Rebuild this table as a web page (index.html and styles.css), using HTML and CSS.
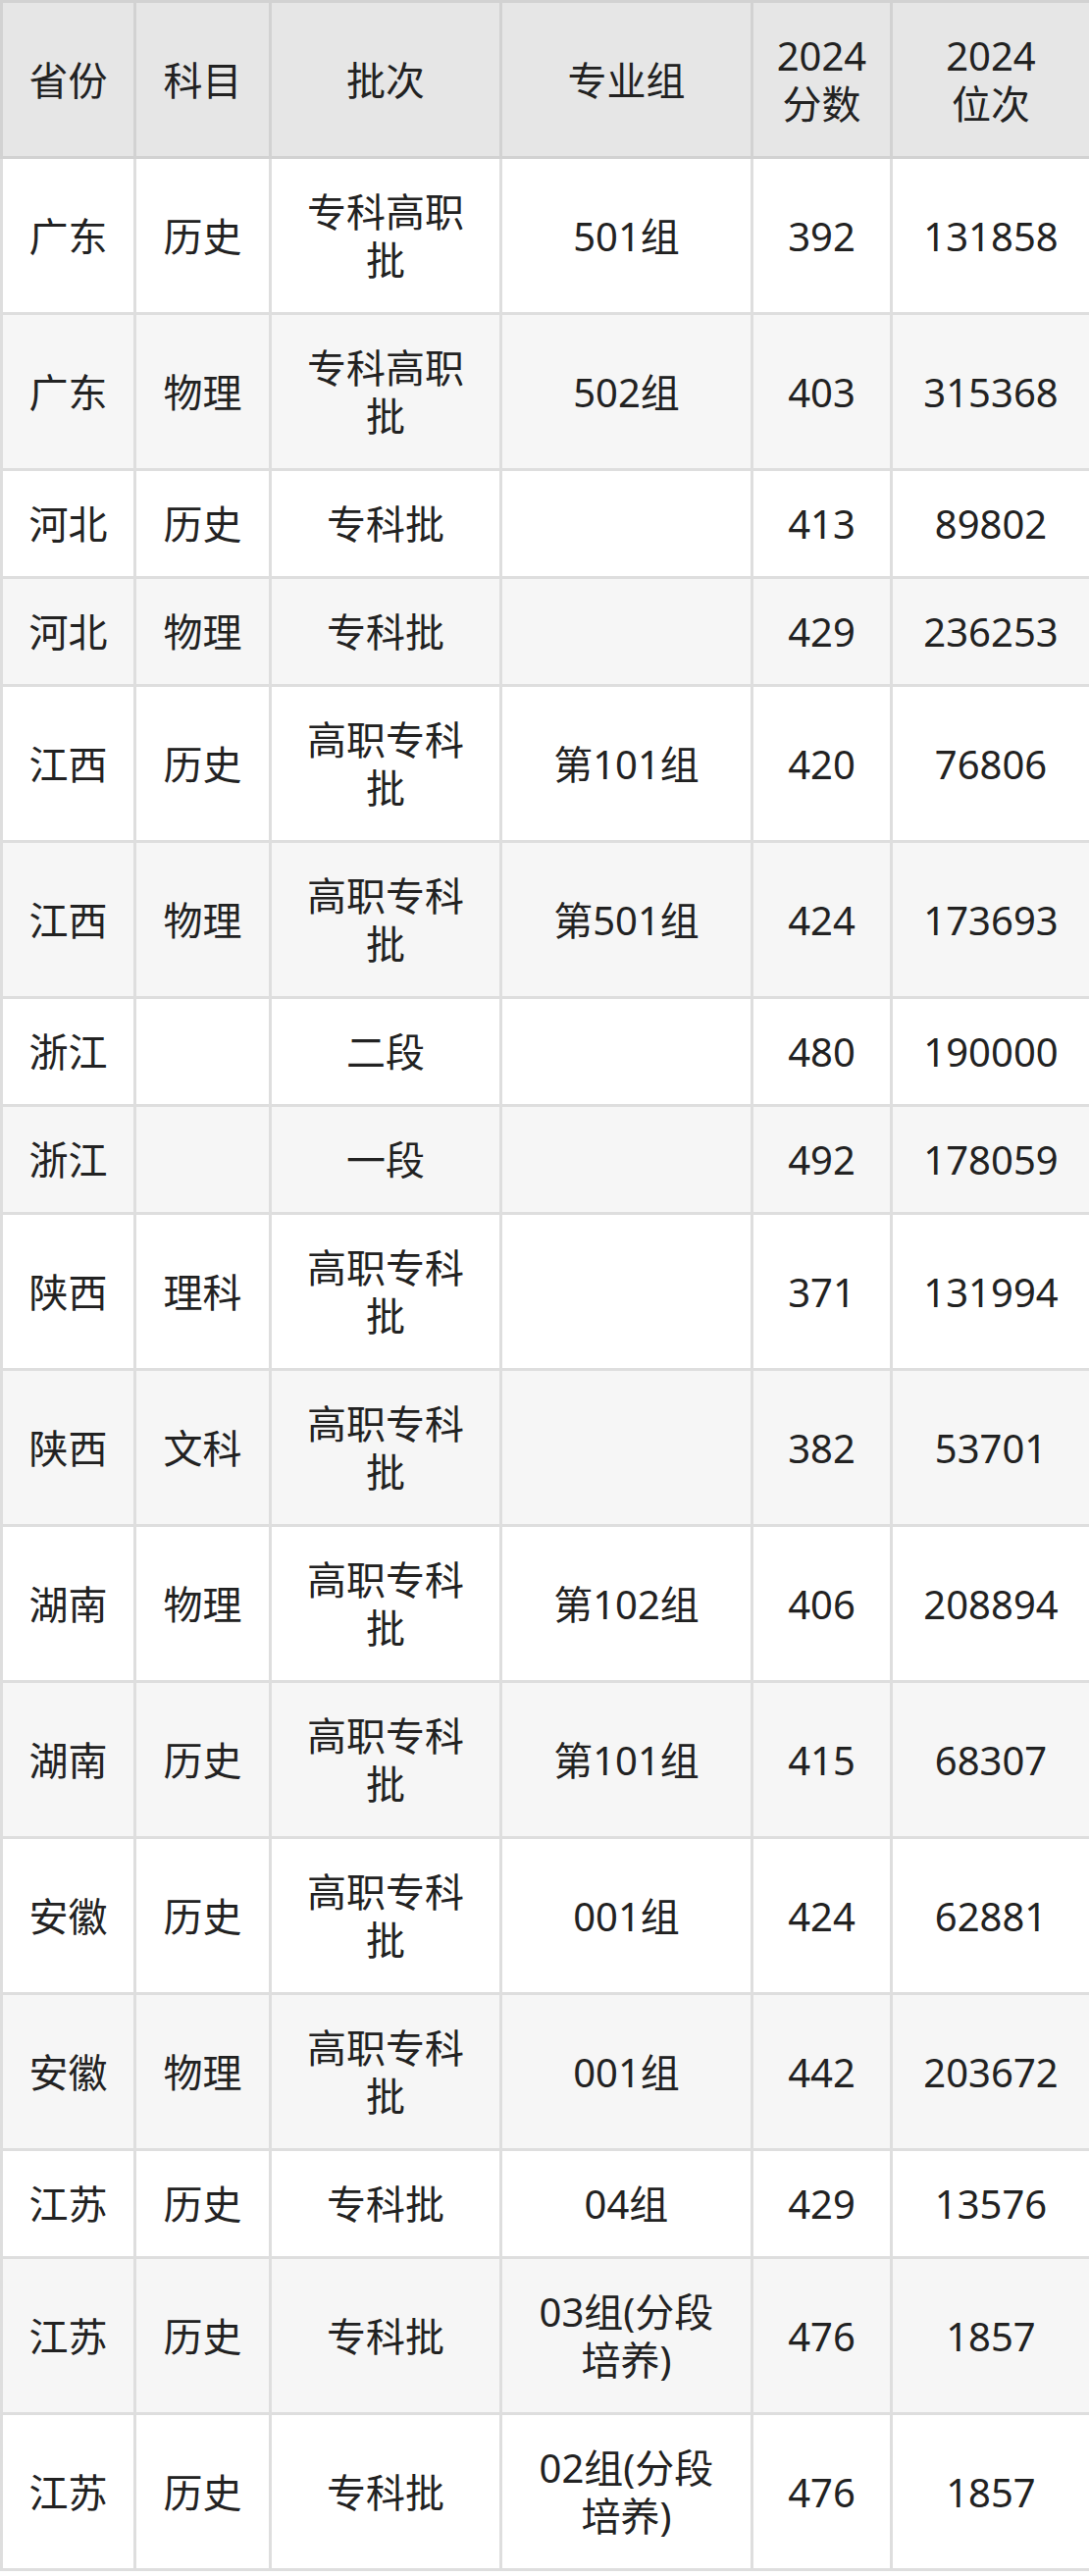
FILE: index.html
```html
<!DOCTYPE html>
<html lang="zh-CN">
<head>
<meta charset="utf-8">
<title>2024 分数位次</title>
<link rel="stylesheet" href="styles.css">
</head>
<body>
<table class="score-table">
  <colgroup>
    <col class="c-prov">
    <col class="c-subj">
    <col class="c-batch">
    <col class="c-group">
    <col class="c-score">
    <col class="c-rank">
  </colgroup>
  <thead>
    <tr>
      <th>省份</th>
      <th>科目</th>
      <th>批次</th>
      <th>专业组</th>
      <th>2024<br>分数</th>
      <th>2024<br>位次</th>
    </tr>
  </thead>
  <tbody>
    <tr><td>广东</td><td>历史</td><td>专科高职批</td><td class="grp">501组</td><td>392</td><td>131858</td></tr>
    <tr><td>广东</td><td>物理</td><td>专科高职批</td><td class="grp">502组</td><td>403</td><td>315368</td></tr>
    <tr><td>河北</td><td>历史</td><td>专科批</td><td class="grp"></td><td>413</td><td>89802</td></tr>
    <tr><td>河北</td><td>物理</td><td>专科批</td><td class="grp"></td><td>429</td><td>236253</td></tr>
    <tr><td>江西</td><td>历史</td><td>高职专科批</td><td class="grp">第101组</td><td>420</td><td>76806</td></tr>
    <tr><td>江西</td><td>物理</td><td>高职专科批</td><td class="grp">第501组</td><td>424</td><td>173693</td></tr>
    <tr><td>浙江</td><td></td><td>二段</td><td class="grp"></td><td>480</td><td>190000</td></tr>
    <tr><td>浙江</td><td></td><td>一段</td><td class="grp"></td><td>492</td><td>178059</td></tr>
    <tr><td>陕西</td><td>理科</td><td>高职专科批</td><td class="grp"></td><td>371</td><td>131994</td></tr>
    <tr><td>陕西</td><td>文科</td><td>高职专科批</td><td class="grp"></td><td>382</td><td>53701</td></tr>
    <tr><td>湖南</td><td>物理</td><td>高职专科批</td><td class="grp">第102组</td><td>406</td><td>208894</td></tr>
    <tr><td>湖南</td><td>历史</td><td>高职专科批</td><td class="grp">第101组</td><td>415</td><td>68307</td></tr>
    <tr><td>安徽</td><td>历史</td><td>高职专科批</td><td class="grp">001组</td><td>424</td><td>62881</td></tr>
    <tr><td>安徽</td><td>物理</td><td>高职专科批</td><td class="grp">001组</td><td>442</td><td>203672</td></tr>
    <tr><td>江苏</td><td>历史</td><td>专科批</td><td class="grp">04组</td><td>429</td><td>13576</td></tr>
    <tr><td>江苏</td><td>历史</td><td>专科批</td><td class="grp">03组(分段培养)</td><td>476</td><td>1857</td></tr>
    <tr><td>江苏</td><td>历史</td><td>专科批</td><td class="grp">02组(分段培养)</td><td>476</td><td>1857</td></tr>
  </tbody>
</table>
</body>
</html>
```

FILE: styles.css
```css
html, body {
  margin: 0;
  padding: 0;
  background: #ffffff;
}

.score-table {
  width: 1110px;
  table-layout: fixed;
  border-collapse: collapse;
  font-family: "Noto Sans", "Noto Sans CJK SC", sans-serif;
  font-size: 40px;
  line-height: 49px;
  color: #222222;
}

.c-prov { width: 136px; }
.c-subj { width: 138px; }
.c-batch { width: 235px; }
.c-group { width: 256px; }
.c-score { width: 142px; }
.c-rank { width: 203px; }

.score-table th,
.score-table td {
  padding: 29px 24px;
  text-align: center;
  vertical-align: middle;
  font-weight: normal;
}

.score-table th {
  background: #e6e6e6;
  border: 3px solid #d2d2d2;
  padding-left: 10px;
  padding-right: 10px;
}

.score-table td {
  border: 3px solid #dedede;
}

.score-table td.grp {
  padding-left: 30px;
  padding-right: 30px;
}

.score-table tbody tr:nth-child(odd) td {
  background: #ffffff;
}

.score-table tbody tr:nth-child(even) td {
  background: #f6f6f6;
}
```
